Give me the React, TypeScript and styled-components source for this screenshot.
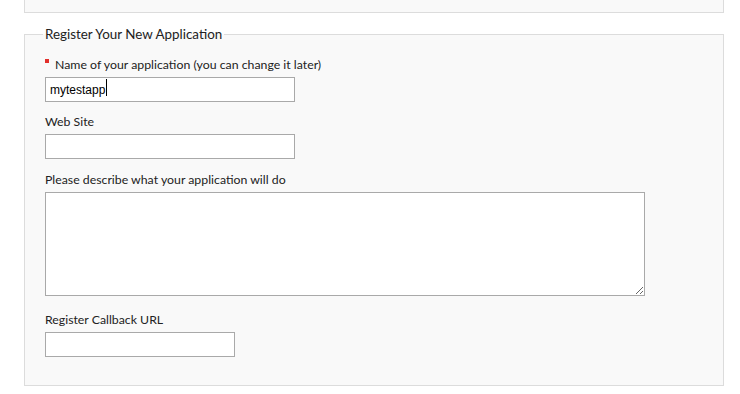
import React from "react"
import styled, { createGlobalStyle } from "styled-components"

const GlobalStyle = createGlobalStyle`
  body {
    margin: 0;
    background: #fff;
    font-family: Lato, "Liberation Sans", sans-serif;
    color: #222;
  }
`

const Page = styled.div`
  padding: 0 16px 0 24px;
`

const PrevSection = styled.div`
  box-sizing: border-box;
  width: 700px;
  height: 13px;
  background: #f9f9f9;
  border: 1px solid #dcdcdc;
  border-top: none;
`

const Fieldset = styled.fieldset`
  box-sizing: border-box;
  width: 700px;
  margin: 13px 0 0;
  padding: 16px 20px 28px;
  background: #f9f9f9;
  border: 1px solid #dcdcdc;
`

const Legend = styled.legend`
  padding: 0 2px;
  margin-left: -2px;
  font-size: 13.4px;
  line-height: 16px;
  color: #222;
`

const Field = styled.div<{ $gap?: number }>`
  margin-bottom: ${(p) => p.$gap ?? 13}px;
  &:last-child {
    margin-bottom: 0;
  }
`

const Label = styled.label`
  display: block;
  font-size: 12.3px;
  line-height: 14px;
  margin-bottom: 5px;
  color: #222;
`

const Required = styled.span`
  display: inline-block;
  width: 4px;
  height: 4px;
  margin: 1px 6px 0 0;
  vertical-align: top;
  background: #e2302b;
`

const InputWrap = styled.div`
  position: relative;
  width: fit-content;
`

// typing caret drawn over the focused input
const Caret = styled.span<{ $left: number }>`
  position: absolute;
  left: ${(p) => p.$left}px;
  top: 2px;
  width: 1px;
  height: 17px;
  background: #000;
  pointer-events: none;
`

const TextInput = styled.input<{ $width: number }>`
  display: block;
  box-sizing: border-box;
  width: ${(p) => p.$width}px;
  height: 25px;
  padding: 0 4px;
  margin: 0;
  border: 1px solid #a9a9a9;
  border-radius: 0;
  background: #fff;
  font-family: "Liberation Sans", Arial, sans-serif;
  font-size: 12px;
  color: #000;
  caret-color: transparent;
  &:focus {
    outline: none;
  }
`

const TextArea = styled.textarea`
  display: block;
  box-sizing: border-box;
  width: 600px;
  height: 104px;
  padding: 2px 4px;
  margin: 0;
  border: 1px solid #a9a9a9;
  border-radius: 0;
  background: #fff;
  font-family: "Liberation Sans", Arial, sans-serif;
  font-size: 12px;
  &:focus {
    outline: none;
  }
`

export default function App() {
  return (
    <Page>
      <GlobalStyle />
      <PrevSection />
      <Fieldset>
        <Legend>Register Your New Application</Legend>
        <Field>
          <Label htmlFor="app-name">
            <Required />
            Name of your application (you can change it later)
          </Label>
          <InputWrap>
            <TextInput id="app-name" $width={250} defaultValue="mytestapp" />
            <Caret $left={61} />
          </InputWrap>
        </Field>
        <Field $gap={14}>
          <Label htmlFor="web-site">Web Site</Label>
          <TextInput id="web-site" $width={250} />
        </Field>
        <Field $gap={17}>
          <Label htmlFor="description">
            Please describe what your application will do
          </Label>
          <TextArea id="description" />
        </Field>
        <Field>
          <Label htmlFor="callback">Register Callback URL</Label>
          <TextInput id="callback" $width={190} />
        </Field>
      </Fieldset>
    </Page>
  )
}
